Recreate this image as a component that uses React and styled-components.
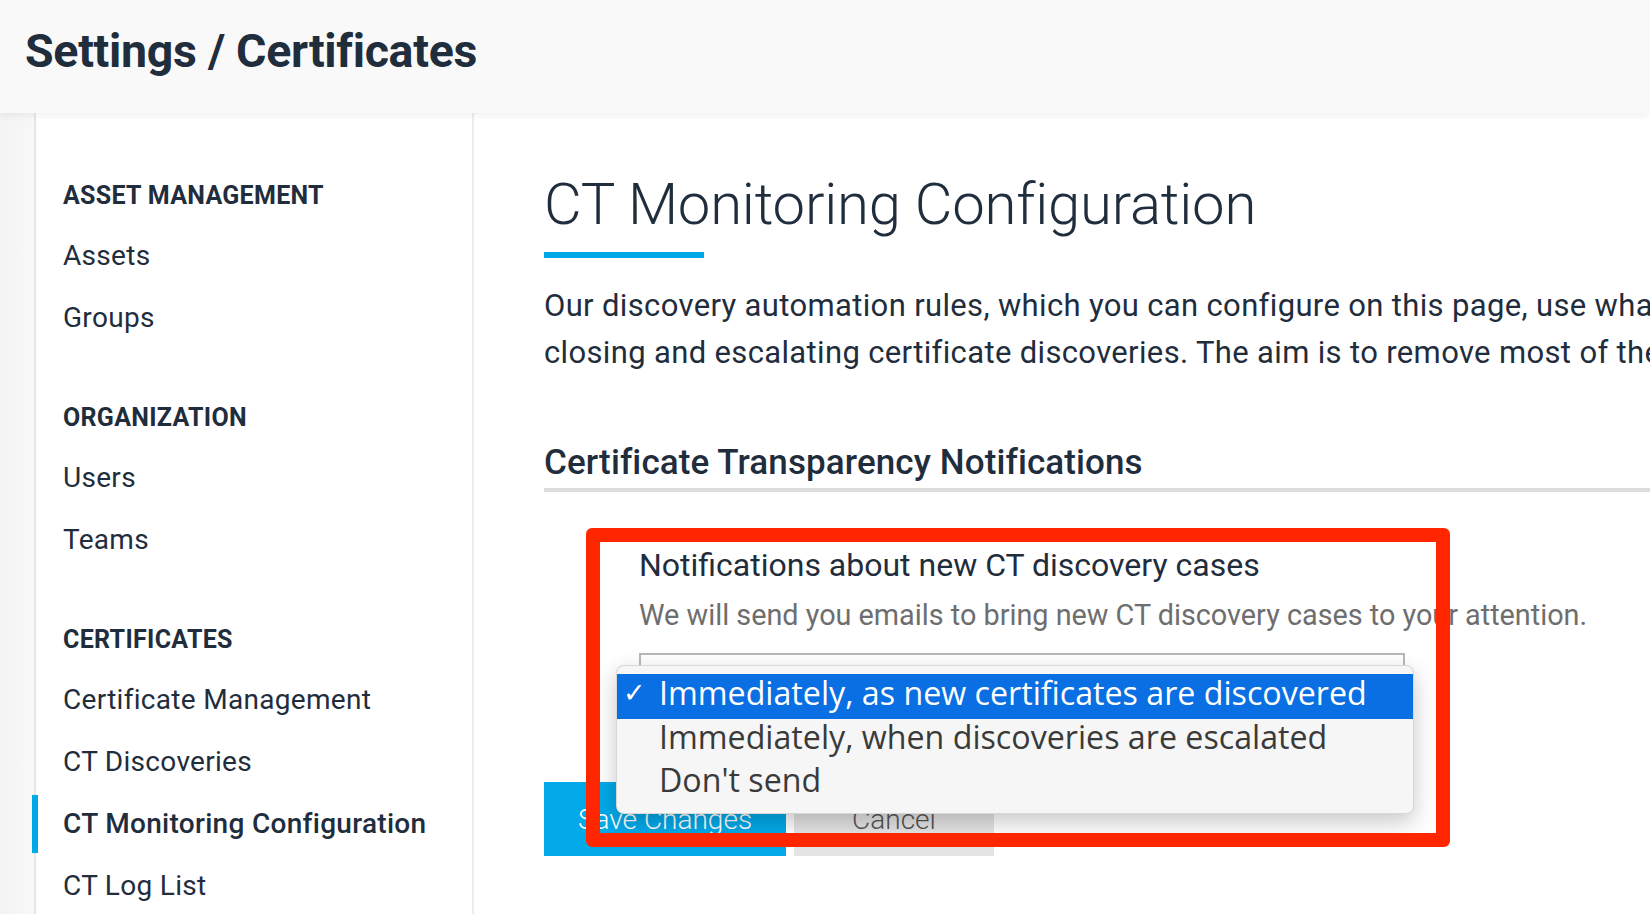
import React from "react";
import styled, { createGlobalStyle } from "styled-components";

const Global = createGlobalStyle`
  html, body {
    margin: 0;
    padding: 0;
    overflow: hidden;
    background: #ffffff;
  }
  body {
    font-family: Roboto, "Liberation Sans", Arial, sans-serif;
    color: #1f2d3d;
  }
  * { box-sizing: border-box; }
`;

const Page = styled.div`
  width: 1650px;
  height: 914px;
  display: flex;
  flex-direction: column;
  overflow: hidden;
`;

const Header = styled.header`
  height: 113px;
  flex: none;
  background: #f9f9f9;
  display: flex;
  align-items: center;
  padding: 0 0 12px 25px;
  position: relative;
  z-index: 1;
  box-shadow: 0 2px 8px rgba(0, 0, 0, 0.07);
`;

const HeaderTitle = styled.h1`
  margin: 0;
  font-size: 46.5px;
  font-weight: 700;
  letter-spacing: -0.3px;
  color: #1f2d3d;
`;

const Body = styled.div`
  flex: 1;
  display: flex;
  min-height: 0;
`;

const Gutter = styled.div`
  width: 34px;
  flex: none;
  background: linear-gradient(to right, #f3f3f3, #f8f8f8);
`;

const Sidebar = styled.nav`
  width: 440px;
  flex: none;
  border-left: 2px solid #e6e6e6;
  border-right: 2px solid #ececec;
  padding: 53px 0 0 27px;
  background: #ffffff;
`;

const Section = styled.div`
  margin-bottom: 39px;
`;

const SectionTitle = styled.div`
  height: 59px;
  line-height: 59px;
  font-size: 25px;
  font-weight: 700;
  color: #1f2d3d;
  letter-spacing: 0.3px;
`;

const NavItem = styled.div`
  position: relative;
  height: 62px;
  line-height: 62px;
  font-size: 28px;
  letter-spacing: 0.3px;
  font-weight: ${(p) => (p.$active ? 500 : 400)};
  color: #1f2d3d;

  &::before {
    content: "";
    display: ${(p) => (p.$active ? "block" : "none")};
    position: absolute;
    left: -31px;
    top: 2px;
    width: 6px;
    height: 58px;
    background: #00a8e8;
  }
`;

const Main = styled.main`
  flex: 1;
  min-width: 0;
  padding: 55px 0 0 70px;
  background: #ffffff;
`;

const PageTitle = styled.h2`
  margin: 0;
  font-size: 58px;
  line-height: 72px;
  font-weight: 300;
  letter-spacing: -0.2px;
  color: #1f2d3d;
  white-space: nowrap;
`;

const TitleBar = styled.div`
  margin-top: 12px;
  width: 160px;
  height: 6px;
  background: #00a8e8;
`;

const Intro = styled.p`
  margin: 24px 0 0;
  font-size: 31px;
  line-height: 47px;
  letter-spacing: 0.35px;
  font-weight: 400;
  color: #1f2d3d;
`;

const IntroLine = styled.span`
  display: block;
  white-space: nowrap;
`;

const SectionHeading = styled.h3`
  margin: 67px 0 0;
  font-size: 35px;
  line-height: 40px;
  font-weight: 500;
  letter-spacing: 0.1px;
  color: #1f2d3d;
  padding-bottom: 5px;
  border-bottom: 4px solid #dcdcdc;
  white-space: nowrap;
`;

const Field = styled.div`
  position: relative;
  margin: 49px 0 0 95px;
`;

const FieldLabel = styled.div`
  font-size: 32px;
  line-height: 48px;
  color: #1f2d3d;
  white-space: nowrap;
`;

const FieldHint = styled.div`
  margin-top: 2px;
  font-size: 28.8px;
  line-height: 48px;
  color: #6e6e6e;
  white-space: nowrap;
`;

const SelectWrap = styled.div`
  position: relative;
  margin-top: 14px;
  width: 766px;
`;

const SelectBox = styled.div`
  height: 60px;
  border: 2px solid #b8b8b8;
  background: #ffffff;
`;

const Menu = styled.ul`
  position: absolute;
  left: -23px;
  top: 12px;
  width: 798px;
  height: 149px;
  margin: 0;
  padding: 8px 0 0;
  list-style: none;
  background: #f6f6f6;
  border: 1px solid rgba(0, 0, 0, 0.12);
  border-radius: 8px;
  box-shadow: 0 8px 22px rgba(0, 0, 0, 0.22);
  z-index: 2;
  font-family: "Open Sans", "DejaVu Sans", sans-serif;
`;

const Option = styled.li`
  position: relative;
  height: ${(p) => (p.$selected ? 45 : 43)}px;
  line-height: ${(p) => (p.$selected ? 38 : 36)}px;
  padding: 0 0 7px 42px;
  font-size: 32.2px;
  white-space: nowrap;
  background: ${(p) => (p.$selected ? "#0a6fe2" : "transparent")};
  color: ${(p) => (p.$selected ? "#ffffff" : "#3a3a3a")};
`;

const Check = styled.span`
  position: absolute;
  left: 6px;
  top: 0;
  font-size: 27px;
  font-weight: 700;
  font-family: "DejaVu Sans", sans-serif;
`;

const Highlight = styled.div`
  position: absolute;
  left: -53px;
  top: -13px;
  width: 864px;
  height: 319px;
  border: 14px solid #ff2600;
  border-radius: 6px;
  pointer-events: none;
  z-index: 3;
`;

const Actions = styled.div`
  display: flex;
  gap: 8px;
  margin-top: 69px;
`;

const Button = styled.button`
  height: 74px;
  width: ${(p) => p.$width}px;
  border: none;
  border-radius: 0;
  font-family: Roboto, "Liberation Sans", sans-serif;
  font-size: 28px;
  font-weight: 300;
  background: ${(p) => (p.$primary ? "#03a9e9" : "#e4e4e4")};
  color: ${(p) => (p.$primary ? "#ffffff" : "#555555")};
  padding: 0;
`;

const sections = [
  { title: "ASSET MANAGEMENT", items: ["Assets", "Groups"] },
  { title: "ORGANIZATION", items: ["Users", "Teams"] },
  {
    title: "CERTIFICATES",
    items: [
      "Certificate Management",
      "CT Discoveries",
      "CT Monitoring Configuration",
      "CT Log List",
    ],
  },
];

const options = [
  "Immediately, as new certificates are discovered",
  "Immediately, when discoveries are escalated",
  "Don't send",
];

export default function App() {
  return (
    <Page>
      <Global />
      <Header>
        <HeaderTitle>Settings / Certificates</HeaderTitle>
      </Header>
      <Body>
        <Gutter />
        <Sidebar>
          {sections.map((s) => (
            <Section key={s.title}>
              <SectionTitle>{s.title}</SectionTitle>
              {s.items.map((it) => (
                <NavItem key={it} $active={it === "CT Monitoring Configuration"}>
                  {it}
                </NavItem>
              ))}
            </Section>
          ))}
        </Sidebar>
        <Main>
          <PageTitle>CT Monitoring Configuration</PageTitle>
          <TitleBar />
          <Intro>
            <IntroLine>
              Our discovery automation rules, which you can configure on this page, use what we know about your certificates to automate opening,
            </IntroLine>
            <IntroLine>
              closing and escalating certificate discoveries. The aim is to remove most of the manual work from handling new cases.
            </IntroLine>
          </Intro>
          <SectionHeading>Certificate Transparency Notifications</SectionHeading>
          <Field>
            <FieldLabel>Notifications about new CT discovery cases</FieldLabel>
            <FieldHint>
              We will send you emails to bring new CT discovery cases to your attention.
            </FieldHint>
            <SelectWrap>
              <SelectBox />
              <Menu>
                {options.map((o, i) => (
                  <Option key={o} $selected={i === 0}>
                    {i === 0 && <Check>✓</Check>}
                    {o}
                  </Option>
                ))}
              </Menu>
            </SelectWrap>
            <Highlight />
          </Field>
          <Actions>
            <Button $primary $width={242}>Save Changes</Button>
            <Button $width={200}>Cancel</Button>
          </Actions>
        </Main>
      </Body>
    </Page>
  );
}
